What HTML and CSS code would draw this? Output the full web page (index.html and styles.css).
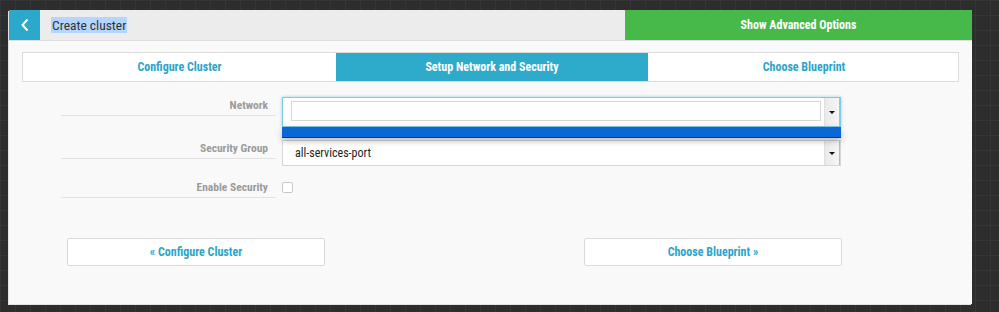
FILE: index.html
```html
<!DOCTYPE html>
<html lang="en">
<head>
    <meta charset="UTF-8">
    <meta name="viewport" content="width=device-width, initial-scale=1.0">
    <title>Create cluster</title>
    <link rel="stylesheet" href="styles.css">
</head>
<body>
    <div class="panel">
        <div class="header">
            <div class="back">
                <svg width="10" height="14" viewBox="0 0 10 14"><path d="M7.5 1.5 L2.5 7 L7.5 12.5" fill="none" stroke="#fff" stroke-width="2"/></svg>
            </div>
            <div class="title"><span class="selected">Create cluster</span></div>
            <div class="advanced">Show Advanced Options</div>
        </div>
        <div class="content">
            <div class="tabs">
                <div class="tab">Configure Cluster</div>
                <div class="tab active">Setup Network and Security</div>
                <div class="tab">Choose Blueprint</div>
            </div>
            <div class="form">
                <div class="row">
                    <div class="label">Network</div>
                    <div class="select focused">
                        <div class="inner"></div>
                        <div class="arrow"></div>
                        <div class="dropdown"></div>
                    </div>
                </div>
                <div class="row">
                    <div class="label">Security Group</div>
                    <div class="select plain">
                        <span class="value">all-services-port</span>
                        <div class="arrow"></div>
                    </div>
                </div>
                <div class="row">
                    <div class="label">Enable Security</div>
                    <div class="check"></div>
                </div>
            </div>
            <div class="buttons">
                <div class="btn">&laquo; Configure Cluster</div>
                <div class="btn">Choose Blueprint &raquo;</div>
            </div>
        </div>
    </div>
</body>
</html>
```
FILE: styles.css
```css
body {
    margin: 0;
    height: 312px;
    overflow: hidden;
    font-family: "Roboto Condensed", "Liberation Sans Narrow", "Roboto", sans-serif;
    background-color: #2d2d2d;
    background-image:
        linear-gradient(#363636 1px, transparent 1px),
        linear-gradient(90deg, #363636 1px, transparent 1px);
    background-size: 15px 15px;
}
.panel {
    margin: 10px 0 0 9px;
    width: 963px;
    height: 294px;
    background: #f9f9f9;
    box-shadow: -1px 1px 0 #e2e2e2;
}
.header {
    display: flex;
    height: 30px;
    border-bottom: 1px solid #dedede;
}
.back {
    width: 31px;
    background: #2ba8ca;
    display: flex;
    align-items: center;
    justify-content: center;
}
.title {
    flex: 1;
    background: #ececec;
    padding-left: 11px;
    display: flex;
    align-items: center;
    font-size: 13.5px;
    color: #333;
}
.selected {
    background: #b4d5fd;
    padding: 0 1px;
    line-height: 16px;
}
.advanced {
    width: 347px;
    background: #46b94a;
    color: #fff;
    font-weight: bold;
    font-size: 12px;
    display: flex;
    align-items: center;
    justify-content: center;
}
.content {
    padding: 11px 13px 0;
}
.tabs {
    display: grid;
    grid-template-columns: 313px 312px 312px;
    height: 28px;
    border: 1px solid #dcdcdc;
    background: #fff;
}
.tab {
    display: flex;
    align-items: center;
    justify-content: center;
    color: #2ba5c9;
    font-weight: bold;
    font-size: 12px;
}
.tab.active {
    background: #2eaacb;
    color: #fff;
}
.form {
    margin-top: 15px;
    padding-left: 39px;
}
.row {
    display: flex;
    align-items: flex-start;
    margin-bottom: 13px;
}
.label {
    width: 207px;
    padding-right: 8px;
    height: 18px;
    line-height: 16px;
    border-bottom: 1px solid #e2e2e2;
    text-align: right;
    color: #9b9b9b;
    font-weight: bold;
    font-size: 11.5px;
}
.select {
    position: relative;
    margin-left: 6px;
    width: 557px;
    background: #fff;
    border: 1px solid #d6d6d6;
}
.select.focused {
    height: 28px;
    border-color: #84c9e2;
    box-shadow: 0 0 3px rgba(80, 180, 220, 0.6);
}
.select.plain {
    height: 24px;
    display: flex;
    align-items: center;
}
.inner {
    position: absolute;
    left: 8px;
    top: 3px;
    width: 528px;
    height: 18px;
    border: 1px solid #d8d8d8;
}
.value {
    padding-left: 12px;
    font-size: 12px;
    color: #222;
}
.arrow {
    position: absolute;
    right: 0;
    top: 0;
    bottom: 0;
    width: 14px;
    background: linear-gradient(90deg, #eaeaea, #f6f6f6);
    border-left: 1px solid #e0e0e0;
    border-right: 1px solid #bcbcbc;
}
.arrow::after {
    content: "";
    position: absolute;
    left: 4px;
    top: 50%;
    margin-top: -1px;
    border-left: 3px solid transparent;
    border-right: 3px solid transparent;
    border-top: 3px solid #111;
}
.dropdown {
    position: absolute;
    left: -1px;
    top: 29px;
    width: 559px;
    height: 10px;
    background: #0968d6;
    border-bottom: 1px solid #1b3a5e;
    box-shadow: 0 3px 6px rgba(0, 0, 0, 0.25);
    z-index: 2;
}
.check {
    margin: 3px 0 0 6px;
    width: 9px;
    height: 9px;
    border: 1px solid #c8c8c8;
    border-radius: 2px;
    background: #fff;
}
.buttons {
    display: flex;
    padding-left: 45px;
    margin-top: 40px;
}
.btn {
    width: 256px;
    height: 26px;
    border: 1px solid #dadada;
    border-radius: 2px;
    background: #fff;
    display: flex;
    align-items: center;
    justify-content: center;
    color: #2ba5c9;
    font-weight: bold;
    font-size: 12px;
}
.btn + .btn {
    margin-left: 259px;
}
```
